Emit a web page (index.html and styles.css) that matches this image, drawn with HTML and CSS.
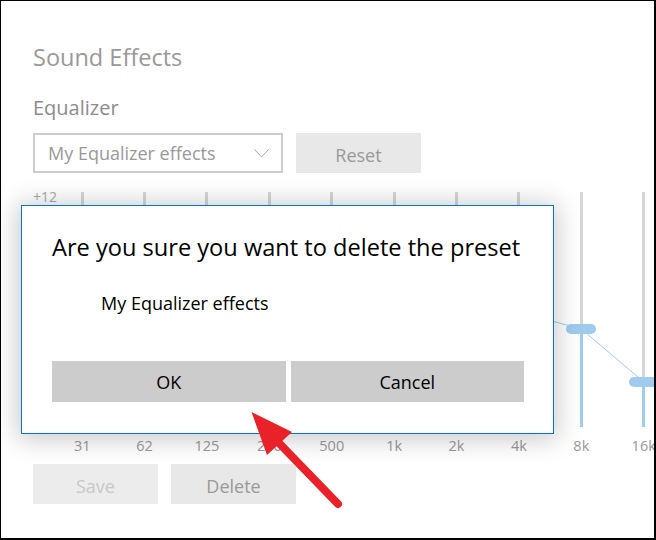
FILE: index.html
```html
<!doctype html>
<html lang="en">
  <head>
    <meta charset="UTF-8" />
    <title>Sound Effects</title>
    <link rel="stylesheet" href="styles.css">
  </head>
  <body>
    <div class="window">
      <h1 class="title">Sound Effects</h1>
      <h2 class="section">Equalizer</h2>

      <div class="controls">
        <div class="dropdown">
          <span>My Equalizer effects</span>
          <svg width="15" height="9" viewBox="0 0 15 9">
            <polyline points="0.5,0.5 7.5,8 14.5,0.5" fill="none" stroke="#a6a6a6" stroke-width="1" />
          </svg>
        </div>
        <button class="btn">Reset</button>
      </div>

      <div class="eq">
        <div class="scale">+12</div>
        <div class="bands">
          <!-- thumb position = px from top of track -->
          <div class="band">
            <div class="track"><div class="fill" style="height: 115px"></div><div class="thumb" style="top: 120px"></div></div>
            <div class="band-label">31</div>
          </div>
          <div class="band">
            <div class="track"><div class="fill" style="height: 115px"></div><div class="thumb" style="top: 120px"></div></div>
            <div class="band-label">62</div>
          </div>
          <div class="band">
            <div class="track"><div class="fill" style="height: 115px"></div><div class="thumb" style="top: 120px"></div></div>
            <div class="band-label">125</div>
          </div>
          <div class="band">
            <div class="track"><div class="fill" style="height: 115px"></div><div class="thumb" style="top: 120px"></div></div>
            <div class="band-label">250</div>
          </div>
          <div class="band">
            <div class="track"><div class="fill" style="height: 115px"></div><div class="thumb" style="top: 120px"></div></div>
            <div class="band-label">500</div>
          </div>
          <div class="band">
            <div class="track"><div class="fill" style="height: 115px"></div><div class="thumb" style="top: 120px"></div></div>
            <div class="band-label">1k</div>
          </div>
          <div class="band">
            <div class="track"><div class="fill" style="height: 115px"></div><div class="thumb" style="top: 120px"></div></div>
            <div class="band-label">2k</div>
          </div>
          <div class="band">
            <div class="track"><div class="fill" style="height: 115px"></div><div class="thumb" style="top: 120px"></div></div>
            <div class="band-label">4k</div>
          </div>
          <div class="band">
            <div class="track"><div class="fill" style="height: 98px"></div><div class="thumb" style="top: 137px"></div></div>
            <div class="band-label">8k</div>
          </div>
          <div class="band">
            <div class="track"><div class="fill" style="height: 45px"></div><div class="thumb" style="top: 190px"></div></div>
            <div class="band-label">16k</div>
          </div>

          <svg class="curve" width="624" height="235">
            <polyline points="31.2,120 93.6,120 156,120 218.4,120 280.8,120 343.2,120 405.6,120 468,120 530.4,137 592.8,190"
              fill="none" stroke="#9fcbef" stroke-width="1" />
          </svg>
        </div>
      </div>

      <div class="actions">
        <button class="btn btn-disabled">Save</button>
        <button class="btn">Delete</button>
      </div>

      <div class="dialog">
        <div class="dialog-title">Are you sure you want to delete the preset</div>
        <div class="dialog-text">My Equalizer effects</div>
        <div class="dialog-buttons">
          <button class="dialog-btn">OK</button>
          <button class="dialog-btn">Cancel</button>
        </div>
      </div>

      <svg class="arrow" width="130" height="110" viewBox="0 0 130 110">
        <line x1="56" y1="40" x2="117" y2="103" stroke="#e92128" stroke-width="8" stroke-linecap="round" />
        <polygon points="30.5,11 71,31 46,54" fill="#e92128" />
      </svg>
    </div>
  </body>
</html>
```

FILE: styles.css
```css
body {
  margin: 0;
  font-family: "Open Sans", "Noto Sans", sans-serif;
}

.window {
  position: relative;
  width: 656px;
  height: 540px;
  box-sizing: border-box;
  border: 1px solid #000;
  border-right-width: 2px;
  border-bottom-width: 2px;
  padding: 40px 0 0 32px;
  overflow: hidden;
  background-color: white;
}

.title {
  margin: 0;
  font-size: 23.5px;
  font-weight: normal;
  line-height: 32px;
  color: #999;
}

.section {
  margin: 21px 0 0;
  font-size: 20px;
  font-weight: normal;
  line-height: 28px;
  color: #8c8c8c;
}

.controls {
  display: flex;
  gap: 13px;
  margin-top: 11px;
}

.dropdown {
  width: 250px;
  height: 40px;
  box-sizing: border-box;
  border: 2px solid #ccc;
  display: flex;
  align-items: center;
  justify-content: space-between;
  padding: 0 12px 0 13px;
  font-size: 18px;
  color: #999;
}

.btn {
  width: 125px;
  height: 40px;
  border: none;
  padding: 3px 0 0;
  background-color: #e8e8e8;
  font-family: inherit;
  font-size: 18px;
  color: #999;
}

.btn-disabled {
  background-color: #ececec;
  color: #c8c8c8;
}

/* Equalizer */
.eq {
  display: flex;
  margin-top: 19px;
}

.scale {
  width: 18px;
  margin-top: -2px;
  font-size: 14px;
  line-height: 14px;
  color: #aaa;
  white-space: nowrap;
}

.bands {
  position: relative;
  display: flex;
}

.band {
  flex: 0 0 62.4px;
  display: flex;
  flex-direction: column;
  align-items: center;
}

.track {
  position: relative;
  width: 3px;
  height: 235px;
  background-color: #d6d6d6;
}

.fill {
  position: absolute;
  left: 0;
  right: 0;
  bottom: 0;
  background-color: #9fcbef;
}

.thumb {
  position: absolute;
  left: -13.5px;
  width: 30px;
  height: 10px;
  margin-top: -5px;
  border-radius: 5px;
  background-color: #9fcbef;
  z-index: 2;
}

.curve {
  position: absolute;
  left: 0;
  top: 0;
  z-index: 1;
}

.band-label {
  margin-top: 9px;
  font-size: 14.5px;
  line-height: 20px;
  color: #999;
}

.actions {
  display: flex;
  gap: 13px;
  margin-top: 8px;
}

/* Dialog */
.dialog {
  position: absolute;
  left: 20px;
  top: 204px;
  width: 533px;
  height: 229px;
  box-sizing: border-box;
  border: 1px solid #0a74d1;
  background-color: white;
  box-shadow: 0 2px 24px 3px rgba(0, 0, 0, 0.22);
  padding: 26px 29px 0 30px;
  z-index: 5;
}

.dialog-title {
  font-size: 23.6px;
  line-height: 30px;
  color: #000;
  white-space: nowrap;
}

.dialog-text {
  margin-top: 29px;
  padding-left: 49px;
  font-size: 18px;
  line-height: 24px;
  color: #000;
}

.dialog-buttons {
  display: flex;
  gap: 5px;
  margin-top: 46px;
}

.dialog-btn {
  flex: 1;
  height: 41px;
  border: none;
  padding: 0;
  background-color: #ccc;
  font-family: inherit;
  font-size: 18px;
  color: #000;
}

.arrow {
  position: absolute;
  left: 220px;
  top: 400px;
  z-index: 10;
}
```
